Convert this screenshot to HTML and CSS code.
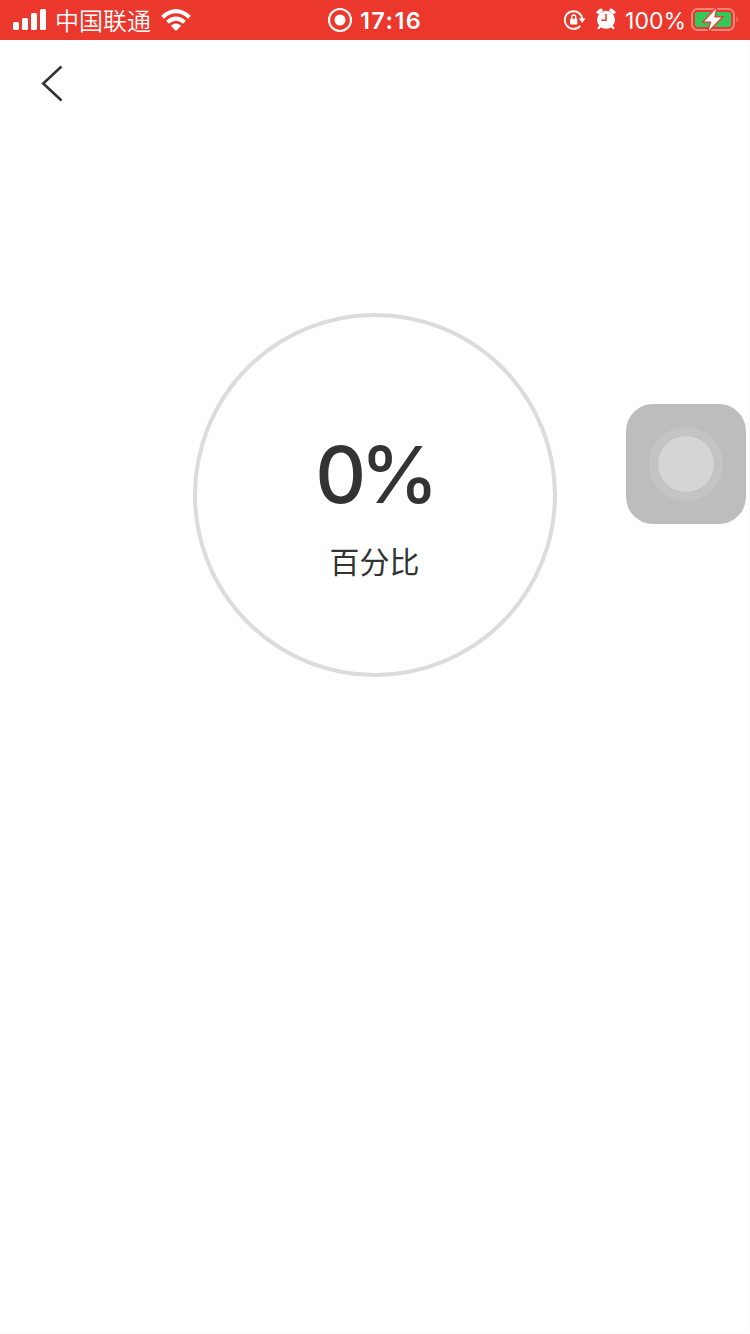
FILE: index.html
```html
<!DOCTYPE html>
<html lang="zh-CN">
<head>
<meta charset="utf-8">
<title>百分比</title>
<link rel="stylesheet" href="styles.css">
</head>
<body>
<header class="status">
  <div class="status-left">
    <svg class="signal" width="33" height="22" viewBox="0 0 33 22" fill="#fff"><rect x="0" y="13" width="6" height="8" rx="1.6"/><rect x="9" y="9" width="6" height="12" rx="1.6"/><rect x="18" y="4" width="6" height="17" rx="1.6"/><rect x="27" y="0" width="6" height="21" rx="1.6"/></svg>
    <span class="carrier">中国联通</span>
    <svg class="wifi" width="30" height="22" viewBox="0 0 30 22"><g fill="none" stroke="#fff" stroke-width="4"><path d="M1.5 8.2Q15 -4 28.5 8.2"/><path d="M6.5 13.2Q15 6 23.5 13.2"/></g><path d="M9.8 16.8Q15 12.4 20.2 16.8L15 22Z" fill="#fff"/></svg>
  </div>
  <div class="status-center">
    <svg width="24" height="24" viewBox="0 0 24 24"><circle cx="12" cy="12" r="11" fill="none" stroke="#fff" stroke-width="2"/><circle cx="12" cy="12" r="5.5" fill="#fff"/></svg>
    <span class="time">17:16</span>
  </div>
  <div class="status-right">
    <svg class="lock" width="22" height="20" viewBox="0 0 22 20"><path d="M16.3 15.8A8.8 8.8 0 1 1 18.3 8.5" fill="none" stroke="#fff" stroke-width="1.9"/><path d="M14.8 8.3H21.5L18.2 13Z" fill="#fff"/><rect x="6.1" y="8.8" width="7.2" height="5.8" rx=".8" fill="#fff"/><path d="M7.7 9V7a2 2 0 0 1 4 0V9" fill="none" stroke="#fff" stroke-width="1.4"/></svg>
    <svg class="alarm" width="20" height="22" viewBox="0 0 20 22"><circle cx="10" cy="11.8" r="9" fill="#fff"/><path d="M2.2 4.3 5 2.2M17.8 4.3 15 2.2" stroke="#fff" stroke-width="3.4" stroke-linecap="round"/><path d="m4.5 18-1.8 2M15.5 18l1.8 2" stroke="#fff" stroke-width="2.4" stroke-linecap="round"/><path d="M10 6V12.3H5.2" fill="none" stroke="#ec372d" stroke-width="1.5"/></svg>
    <span class="level">100%</span>
    <svg class="battery" width="48" height="24" viewBox="0 0 48 24"><rect x="1" y="1" width="42" height="21" rx="5.5" fill="none" stroke="#f7857d" stroke-width="2"/><path d="M45.5 8.5Q48 11.5 45.5 14.5Z" fill="#f7857d"/><rect x="4" y="4" width="36" height="15" rx="2.5" fill="#34c759"/><path d="M25 .8 13.2 13.4H20.3L17.6 22.6 30.4 9.6H23.2Z" fill="#fff" stroke="#ec372d" stroke-width="2.6" paint-order="stroke"/></svg>
  </div>
</header>
<nav class="nav">
  <svg width="22" height="37" viewBox="0 0 22 37"><path d="M20.5 1.5 2.2 18.5 20.5 35.5" fill="none" stroke="#333" stroke-width="2.6"/></svg>
</nav>
<main class="content">
  <section class="ring">
    <div class="value">0%</div>
    <div class="label">百分比</div>
  </section>
</main>
<div class="assistive"><div class="halo"><div class="knob"></div></div></div>
</body>
</html>
```
FILE: styles.css
```css
* { box-sizing: border-box; }
html { background: #fcfcfc; }
body {
  margin: 0;
  height: 1334px;
  overflow: hidden;
  background: linear-gradient(#fff, #fff) 0 0 / 748px 1332px no-repeat;
  color: #333;
  font-family: Inter, "Noto Sans CJK SC", sans-serif;
}
svg { display: block; flex: none; }
.status {
  display: grid;
  grid-template: 40px / 328px 1fr auto;
  height: 40px;
  padding-right: 11px;
  background: #ec372d;
  color: #fff;
  line-height: 36px;
  white-space: nowrap;
}
.status-left, .status-center, .status-right { display: flex; align-items: center; }
.status-left { padding-left: 13px; }
.carrier { margin: 0 10px 0 9px; font: 350 24px/40px "Noto Sans CJK SC", sans-serif; }
.time { margin-left: 8px; padding-top: 1px; font-size: 23.5px; font-weight: 600; letter-spacing: 1.4px; }
.alarm { margin: 0 9px 2px 10px; }
.level { margin-right: 5px; padding-top: 2px; font-size: 23px; }
.nav { display: flex; align-items: center; height: 86px; padding-left: 41px; }
.content { display: flex; justify-content: center; padding-top: 187px; }
.ring {
  width: 364px;
  height: 364px;
  padding-top: 112px;
  border: 4px solid #dcdcdc;
  border-radius: 50%;
  text-align: center;
}
.value {
  height: 90px;
  padding-right: 2px;
  font-size: 79px;
  font-weight: 500;
  line-height: 90px;
  letter-spacing: -6px;
}
.label { margin-top: 19px; padding-right: 1px; font: 400 30px/44px "Noto Sans CJK SC", sans-serif; }
.assistive {
  position: absolute;
  left: 626px;
  top: 404px;
  display: grid;
  place-items: center;
  width: 120px;
  height: 120px;
  border-radius: 27px;
  background: #bdbdbd;
}
.halo { display: grid; place-items: center; width: 74px; height: 74px; border-radius: 50%; background: #c4c4c4; }
.knob { width: 58px; height: 58px; border: 1px solid #c0c0c0; border-radius: 50%; background: #d5d5d5; }
```
